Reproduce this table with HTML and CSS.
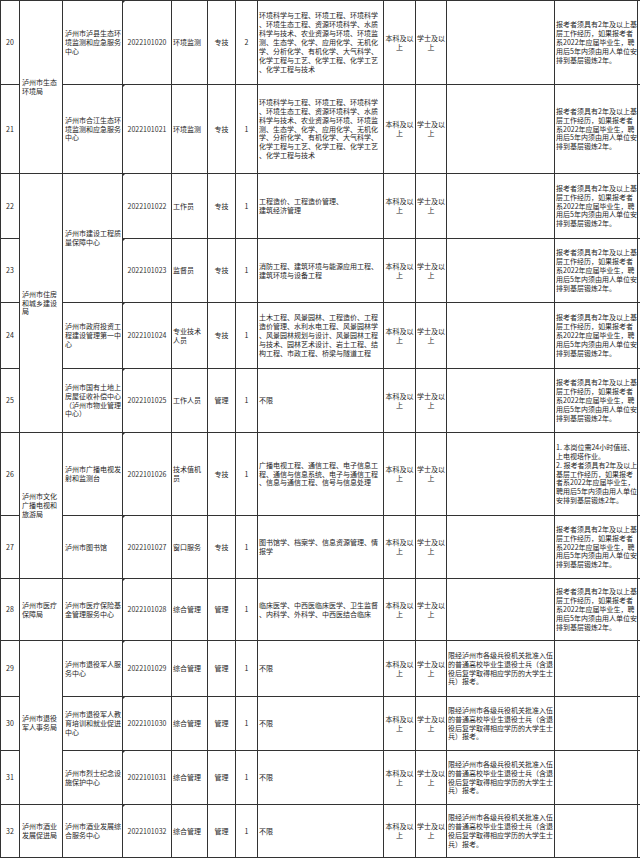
FILE: index.html
```html
<!DOCTYPE html>
<html lang="zh-CN">
<head>
<meta charset="utf-8">
<title>岗位表</title>
<link rel="stylesheet" href="styles.css">
</head>
<body>
<table class="sheet">
<colgroup>
<col class="w-num"><col class="w-dept"><col class="w-unit"><col class="w-code"><col class="w-pos"><col class="w-cat"><col class="w-cnt"><col class="w-major"><col class="w-edu"><col class="w-deg"><col class="w-cond"><col class="w-note"><col class="w-x">
</colgroup>
<tbody>
<tr class="r20">
<td class="num">20</td>
<td class="dept" rowspan="2">泸州市生态<br>环境局</td>
<td class="unit">泸州市泸县生态环<br>境监测和应急服务<br>中心</td>
<td class="code">2022101020</td>
<td class="pos">环境监测</td>
<td class="cat">专技</td>
<td class="cnt">2</td>
<td class="major">环境科学与工程、环境工程、环境科学<br>、环境生态工程、资源环境科学、水质<br>科学与技术、农业资源与环境、环境监<br>测、生态学、化学、应用化学、无机化<br>学、分析化学、有机化学、大气科学、<br>化学工程与工艺、化学工程、化学工艺<br>、化学工程与技术</td>
<td class="edu">本科及以<br>上</td>
<td class="deg">学士及以<br>上</td>
<td class="cond"></td>
<td class="note">报考者须具有2年及以上基<br>层工作经历，如果报考者<br>系2022年应届毕业生，聘<br>用后5年内须由用人单位安<br>排到基层锻炼2年。</td>
<td class="x"></td>
</tr>
<tr class="r21">
<td class="num">21</td>
<td class="unit">泸州市合江生态环<br>境监测和应急服务<br>中心</td>
<td class="code">2022101021</td>
<td class="pos">环境监测</td>
<td class="cat">专技</td>
<td class="cnt">1</td>
<td class="major">环境科学与工程、环境工程、环境科学<br>、环境生态工程、资源环境科学、水质<br>科学与技术、农业资源与环境、环境监<br>测、生态学、化学、应用化学、无机化<br>学、分析化学、有机化学、大气科学、<br>化学工程与工艺、化学工程、化学工艺<br>、化学工程与技术</td>
<td class="edu">本科及以<br>上</td>
<td class="deg">学士及以<br>上</td>
<td class="cond"></td>
<td class="note">报考者须具有2年及以上基<br>层工作经历，如果报考者<br>系2022年应届毕业生，聘<br>用后5年内须由用人单位安<br>排到基层锻炼2年。</td>
<td class="x"></td>
</tr>
<tr class="r22">
<td class="num">22</td>
<td class="dept" rowspan="4">泸州市住房<br>和城乡建设<br>局</td>
<td class="unit" rowspan="2">泸州市建设工程质<br>量保障中心</td>
<td class="code">2022101022</td>
<td class="pos">工作员</td>
<td class="cat">专技</td>
<td class="cnt">1</td>
<td class="major">工程造价、工程造价管理、<br>建筑经济管理</td>
<td class="edu">本科及以<br>上</td>
<td class="deg">学士及以<br>上</td>
<td class="cond"></td>
<td class="note">报考者须具有2年及以上基<br>层工作经历，如果报考者<br>系2022年应届毕业生，聘<br>用后5年内须由用人单位安<br>排到基层锻炼2年。</td>
<td class="x"></td>
</tr>
<tr class="r23">
<td class="num">23</td>
<td class="code">2022101023</td>
<td class="pos">监督员</td>
<td class="cat">专技</td>
<td class="cnt">1</td>
<td class="major">消防工程、建筑环境与能源应用工程、<br>建筑环境与设备工程</td>
<td class="edu">本科及以<br>上</td>
<td class="deg">学士及以<br>上</td>
<td class="cond"></td>
<td class="note">报考者须具有2年及以上基<br>层工作经历，如果报考者<br>系2022年应届毕业生，聘<br>用后5年内须由用人单位安<br>排到基层锻炼2年。</td>
<td class="x"></td>
</tr>
<tr class="r24">
<td class="num">24</td>
<td class="unit">泸州市政府投资工<br>程建设管理第一中<br>心</td>
<td class="code">2022101024</td>
<td class="pos">专业技术<br>人员</td>
<td class="cat">专技</td>
<td class="cnt">1</td>
<td class="major">土木工程、风景园林、工程造价、工程<br>造价管理、水利水电工程、风景园林学<br>、风景园林规划与设计、风景园林工程<br>与技术、园林艺术设计、岩土工程、结<br>构工程、市政工程、桥梁与隧道工程</td>
<td class="edu">本科及以<br>上</td>
<td class="deg">学士及以<br>上</td>
<td class="cond"></td>
<td class="note">报考者须具有2年及以上基<br>层工作经历，如果报考者<br>系2022年应届毕业生，聘<br>用后5年内须由用人单位安<br>排到基层锻炼2年。</td>
<td class="x"></td>
</tr>
<tr class="r25">
<td class="num">25</td>
<td class="unit">泸州市国有土地上<br>房屋征收补偿中心<br>（泸州市物业管理<br>中心）</td>
<td class="code">2022101025</td>
<td class="pos">工作人员</td>
<td class="cat">管理</td>
<td class="cnt">1</td>
<td class="major">不限</td>
<td class="edu">本科及以<br>上</td>
<td class="deg">学士及以<br>上</td>
<td class="cond"></td>
<td class="note">报考者须具有2年及以上基<br>层工作经历，如果报考者<br>系2022年应届毕业生，聘<br>用后5年内须由用人单位安<br>排到基层锻炼2年。</td>
<td class="x"></td>
</tr>
<tr class="r26">
<td class="num">26</td>
<td class="dept" rowspan="2">泸州市文化<br>广播电视和<br>旅游局</td>
<td class="unit">泸州市广播电视发<br>射和监测台</td>
<td class="code">2022101026</td>
<td class="pos">技术值机<br>员</td>
<td class="cat">专技</td>
<td class="cnt">1</td>
<td class="major">广播电视工程、通信工程、电子信息工<br>程、通信与信息系统、电子与通信工程<br>、信息与通信工程、信号与信息处理</td>
<td class="edu">本科及以<br>上</td>
<td class="deg">学士及以<br>上</td>
<td class="cond"></td>
<td class="note">1. 本岗位需24小时值班、<br>上电视塔作业。<br>2. 报考者须具有2年及以上<br>基层工作经历，如果报考<br>者系2022年应届毕业生，<br>聘用后5年内须由用人单位<br>安排到基层锻炼2年。</td>
<td class="x"></td>
</tr>
<tr class="r27">
<td class="num">27</td>
<td class="unit">泸州市图书馆</td>
<td class="code">2022101027</td>
<td class="pos">窗口服务</td>
<td class="cat">专技</td>
<td class="cnt">1</td>
<td class="major">图书馆学、档案学、信息资源管理、情<br>报学</td>
<td class="edu">本科及以<br>上</td>
<td class="deg">学士及以<br>上</td>
<td class="cond"></td>
<td class="note">报考者须具有2年及以上基<br>层工作经历，如果报考者<br>系2022年应届毕业生，聘<br>用后5年内须由用人单位安<br>排到基层锻炼2年。</td>
<td class="x"></td>
</tr>
<tr class="r28">
<td class="num">28</td>
<td class="dept">泸州市医疗<br>保障局</td>
<td class="unit">泸州市医疗保险基<br>金管理服务中心</td>
<td class="code">2022101028</td>
<td class="pos">综合管理</td>
<td class="cat">管理</td>
<td class="cnt">1</td>
<td class="major">临床医学、中西医临床医学、卫生监督<br>、内科学、外科学、中西医结合临床</td>
<td class="edu">本科及以<br>上</td>
<td class="deg">学士及以<br>上</td>
<td class="cond"></td>
<td class="note">报考者须具有2年及以上基<br>层工作经历，如果报考者<br>系2022年应届毕业生，聘<br>用后5年内须由用人单位安<br>排到基层锻炼2年。</td>
<td class="x"></td>
</tr>
<tr class="r29">
<td class="num">29</td>
<td class="dept" rowspan="3">泸州市退役<br>军人事务局</td>
<td class="unit">泸州市退役军人服<br>务中心</td>
<td class="code">2022101029</td>
<td class="pos">综合管理</td>
<td class="cat">管理</td>
<td class="cnt">1</td>
<td class="major">不限</td>
<td class="edu">本科及以<br>上</td>
<td class="deg">学士及以<br>上</td>
<td class="cond">限经泸州市各级兵役机关批准入伍<br>的普通高校毕业生退役士兵（含退<br>役后复学取得相应学历的大学生士<br>兵）报考。</td>
<td class="note"></td>
<td class="x"></td>
</tr>
<tr class="r30">
<td class="num">30</td>
<td class="unit">泸州市退役军人教<br>育培训和就业促进<br>中心</td>
<td class="code">2022101030</td>
<td class="pos">综合管理</td>
<td class="cat">管理</td>
<td class="cnt">1</td>
<td class="major">不限</td>
<td class="edu">本科及以<br>上</td>
<td class="deg">学士及以<br>上</td>
<td class="cond">限经泸州市各级兵役机关批准入伍<br>的普通高校毕业生退役士兵（含退<br>役后复学取得相应学历的大学生士<br>兵）报考。</td>
<td class="note"></td>
<td class="x"></td>
</tr>
<tr class="r31">
<td class="num">31</td>
<td class="unit">泸州市烈士纪念设<br>施保护中心</td>
<td class="code">2022101031</td>
<td class="pos">综合管理</td>
<td class="cat">管理</td>
<td class="cnt">1</td>
<td class="major">不限</td>
<td class="edu">本科及以<br>上</td>
<td class="deg">学士及以<br>上</td>
<td class="cond">限经泸州市各级兵役机关批准入伍<br>的普通高校毕业生退役士兵（含退<br>役后复学取得相应学历的大学生士<br>兵）报考。</td>
<td class="note"></td>
<td class="x"></td>
</tr>
<tr class="r32">
<td class="num">32</td>
<td class="dept">泸州市酒业<br>发展促进局</td>
<td class="unit">泸州市酒业发展综<br>合服务中心</td>
<td class="code">2022101032</td>
<td class="pos">综合管理</td>
<td class="cat">管理</td>
<td class="cnt">1</td>
<td class="major">不限</td>
<td class="edu">本科及以<br>上</td>
<td class="deg">学士及以<br>上</td>
<td class="cond">限经泸州市各级兵役机关批准入伍<br>的普通高校毕业生退役士兵（含退<br>役后复学取得相应学历的大学生士<br>兵）报考。</td>
<td class="note"></td>
<td class="x"></td>
</tr>
</tbody>
</table>
</body>
</html>
```
FILE: styles.css
```css
html, body {
  margin: 0;
  padding: 0;
  background: #ffffff;
  overflow: hidden;
}

.sheet {
  border-collapse: collapse;
  table-layout: fixed;
  width: 660px;
  font-family: "Noto Sans CJK SC", "Noto Sans", sans-serif;
  color: #1e1e1e;
}

.w-num { width: 19px; }
.w-dept { width: 43px; }
.w-unit { width: 60px; }
.w-code { width: 49px; }
.w-pos { width: 36px; }
.w-cat { width: 28px; }
.w-cnt { width: 22px; }
.w-major { width: 126px; }
.w-edu { width: 32px; }
.w-deg { width: 31px; }
.w-cond { width: 108px; }
.w-note { width: 83px; }
.w-x { width: 23px; }

.sheet td {
  border: 1px solid #333;
  padding: 0 1px;
  font-size: 7px;
  line-height: 8.9px;
  vertical-align: middle;
  white-space: nowrap;
  overflow: hidden;
  text-align: left;
}

.sheet td.num,
.sheet td.code,
.sheet td.cat,
.sheet td.cnt,
.sheet td.edu,
.sheet td.deg {
  text-align: center;
}

.sheet td.unit { padding-left: 2px; }
.sheet td.dept { padding-left: 2px; }

.sheet td.code { position: relative; color: #333; }
.sheet td.code::before {
  content: "";
  position: absolute;
  left: 0;
  top: 0;
  border-top: 2px solid #333;
  border-right: 2px solid transparent;
}

.r20 { height: 84px; }
.r21 { height: 89px; }
.r22 { height: 65px; }
.r23 { height: 64px; }
.r24 { height: 66px; }
.r25 { height: 64px; }
.r26 { height: 83px; }
.r27 { height: 63px; }
.r28 { height: 62px; }
.r29 { height: 56px; }
.r30 { height: 54px; }
.r31 { height: 54px; }
.r32 { height: 53px; }
```
